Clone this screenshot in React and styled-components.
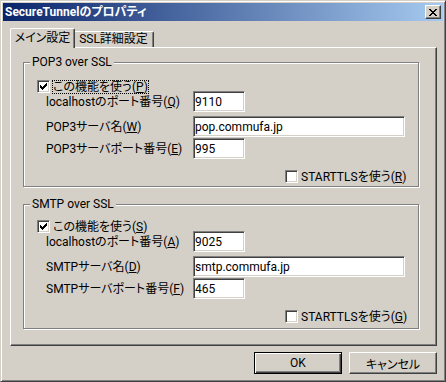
import React from "react";
import styled, { createGlobalStyle } from "styled-components";

const GlobalStyle = createGlobalStyle`
  html, body { margin: 0; padding: 0; background: #d4d0c8; }
  body {
    font-family: Roboto, "Noto Sans CJK JP", sans-serif;
    font-size: 12px;
    font-feature-settings: "palt" 1;
    color: #000;
  }
  input, button { font-feature-settings: "palt" 1; }
`;

const Window = styled.div`
  width: 446px;
  height: 382px;
  box-sizing: border-box;
  background: #d4d0c8;
  border: 1px solid;
  border-color: #d4d0c8 #404040 #404040 #d4d0c8;
  box-shadow: inset 1px 1px #fff, inset -1px -1px #808080;
  padding: 2px;
  display: flex;
  flex-direction: column;
`;

const TitleBar = styled.div`
  height: 18px;
  flex: none;
  display: flex;
  align-items: center;
  padding: 0 2px;
  background: linear-gradient(to right, #0a246a, #a6caf0);
  color: #fff;
`;

const TitleText = styled.div`
  flex: 1;
  font-weight: bold;
  font-size: 12px;
  line-height: 18px;
  white-space: nowrap;
`;

const CloseButton = styled.div`
  width: 16px;
  height: 14px;
  box-sizing: border-box;
  background: #d4d0c8;
  border: 1px solid;
  border-color: #fff #404040 #404040 #fff;
  box-shadow: inset -1px -1px #808080;
  display: flex;
  align-items: center;
  justify-content: center;
  svg { display: block; }
`;

const Body = styled.div`
  display: flex;
  flex-direction: column;
  padding: 7px 6px 0 7px;
`;

const TabStrip = styled.div`
  display: flex;
  align-items: flex-end;
  height: 19px;
`;

const Tab = styled.div`
  box-sizing: border-box;
  width: ${(p) => p.$width}px;
  height: ${(p) => (p.$active ? 20 : 16)}px;
  margin-bottom: ${(p) => (p.$active ? -1 : 0)}px;
  margin-right: ${(p) => (p.$active ? -2 : 0)}px;
  padding-bottom: ${(p) => (p.$active ? 1 : 0)}px;
  position: relative;
  z-index: ${(p) => (p.$active ? 1 : 0)};
  background: #d4d0c8;
  border-left: 1px solid #fff;
  border-top: 1px solid #fff;
  border-right: 1px solid #404040;
  border-radius: 2px 2px 0 0;
  box-shadow: inset -1px 0 #808080;
  display: flex;
  align-items: center;
  justify-content: center;
  line-height: 13px;
  white-space: nowrap;
`;

const Panel = styled.div`
  box-sizing: border-box;
  width: 427px;
  height: 299px;
  border: 1px solid;
  border-color: #fff #404040 #404040 #fff;
  box-shadow: inset -1px -1px #808080;
  padding: 14px 0 0 12px;
`;

const GroupBox = styled.div`
  position: relative;
  box-sizing: border-box;
  width: 396px;
  height: 125px;
  margin-top: ${(p) => p.$mt || 0}px;
  padding: ${(p) => p.$pt}px 0 0 13px;
  border: 1px solid #808080;
  box-shadow: inset 1px 1px #fff, 1px 1px 0 #fff;
`;

const Legend = styled.div`
  position: absolute;
  top: -7px;
  left: 6px;
  padding: 0 2px;
  background: #d4d0c8;
  line-height: 12px;
  white-space: nowrap;
`;

const CheckRow = styled.div`
  display: flex;
  align-items: center;
  height: 15px;
  margin-top: ${(p) => p.$mt || 0}px;
  margin-left: ${(p) => p.$ml || 0}px;
`;

const CheckBox = styled.div`
  flex: none;
  width: 13px;
  height: 13px;
  box-sizing: border-box;
  background: #fff;
  border: 1px solid;
  border-color: #808080 #fff #fff #808080;
  box-shadow: inset 1px 1px #404040, inset -1px -1px #d4d0c8;
  svg { display: block; }
`;

const CheckLabel = styled.span`
  margin-left: 2px;
  border: 1px dotted ${(p) => (p.$focused ? "#000" : "transparent")};
  line-height: 12px;
  white-space: nowrap;
`;

const FieldRow = styled.div`
  display: grid;
  grid-template-columns: 147px auto;
  align-items: center;
  margin-top: ${(p) => p.$mt || 0}px;
  margin-left: 9px;
`;

const FieldLabel = styled.span`
  white-space: nowrap;
  line-height: 12px;
`;

const TextBox = styled.input`
  box-sizing: border-box;
  width: ${(p) => p.$width}px;
  height: 21px;
  margin: 0;
  padding: 0 0 0 1px;
  border: 1px solid;
  border-color: #808080 #fff #fff #808080;
  box-shadow: inset 1px 1px #404040, inset -1px -1px #d4d0c8;
  background: #fff;
  font: inherit;
  font-size: 12px;
  color: #000;
  outline: none;
`;

const ButtonRow = styled.div`
  display: flex;
  justify-content: flex-end;
  gap: 7px;
  margin-top: 6px;
`;

const Button = styled.button`
  box-sizing: border-box;
  width: 88px;
  height: 22px;
  margin: 0;
  padding: 0;
  background: #d4d0c8;
  font: inherit;
  font-size: 12px;
  color: #000;
  border: 1px solid;
  border-color: ${(p) => (p.$default ? "#000" : "#fff #404040 #404040 #fff")};
  box-shadow: ${(p) =>
    p.$default
      ? "inset 1px 1px #fff, inset -1px -1px #404040, inset -2px -2px #808080"
      : "inset -1px -1px #808080"};
`;

const CHECK = [5, 6, 7, 6, 5, 4, 3];

function Check({ checked }) {
  return (
    <CheckBox>
      {checked && (
        <svg width="11" height="11" shapeRendering="crispEdges">
          {CHECK.map((y, i) => (
            <rect key={i} x={2 + i} y={y - 1} width="1" height="3" fill="#000" />
          ))}
        </svg>
      )}
    </CheckBox>
  );
}

const CLOSE = [
  [[0, 2], [6, 2]],
  [[1, 2], [5, 2]],
  [[2, 2], [4, 2]],
  [[3, 2]],
  [[2, 2], [4, 2]],
  [[1, 2], [5, 2]],
  [[0, 2], [6, 2]],
];

function CloseGlyph() {
  return (
    <svg width="8" height="7" shapeRendering="crispEdges">
      {CLOSE.flatMap((row, y) =>
        row.map(([x, w], k) => <rect key={`${y}-${k}`} x={x} y={y} width={w} height="1" fill="#000" />)
      )}
    </svg>
  );
}

function Mn({ pre, k }) {
  return (
    <>
      {pre}(<u>{k}</u>)
    </>
  );
}

function Group({ title, mt, pt, focused, enable, local, host, port, tls, server }) {
  return (
    <GroupBox $mt={mt} $pt={pt}>
      <Legend>{title}</Legend>
      <CheckRow>
        <Check checked />
        <CheckLabel $focused={focused}>
          <Mn pre="この機能を使う" k={enable[0]} />
        </CheckLabel>
      </CheckRow>
      <FieldRow $mt={-3}>
        <FieldLabel>
          <Mn pre="localhostのポート番号" k={local[0]} />
        </FieldLabel>
        <TextBox $width={52} readOnly value={local[1]} />
      </FieldRow>
      <FieldRow $mt={4}>
        <FieldLabel>
          <Mn pre={`${server}サーバ名`} k={host[0]} />
        </FieldLabel>
        <TextBox $width={212} readOnly value={host[1]} />
      </FieldRow>
      <FieldRow $mt={1}>
        <FieldLabel>
          <Mn pre={`${server}サーバポート番号`} k={port[0]} />
        </FieldLabel>
        <TextBox $width={52} readOnly value={port[1]} />
      </FieldRow>
      <CheckRow $mt={10} $ml={248}>
        <Check />
        <CheckLabel>
          <Mn pre="STARTTLSを使う" k={tls} />
        </CheckLabel>
      </CheckRow>
    </GroupBox>
  );
}

export default function App() {
  return (
    <>
      <GlobalStyle />
      <Window>
        <TitleBar>
          <TitleText>SecureTunnelのプロパティ</TitleText>
          <CloseButton>
            <CloseGlyph />
          </CloseButton>
        </TitleBar>
        <Body>
          <TabStrip>
            <Tab $active $width={65}>メイン設定</Tab>
            <Tab $width={81}>SSL詳細設定</Tab>
          </TabStrip>
          <Panel>
            <Group
              title="POP3 over SSL"
              pt={16}
              focused
              server="POP3"
              enable={["P"]}
              local={["Q", "9110"]}
              host={["W", "pop.commufa.jp"]}
              port={["E", "995"]}
              tls="R"
            />
            <Group
              title="SMTP over SSL"
              mt={17}
              pt={14}
              server="SMTP"
              enable={["S"]}
              local={["A", "9025"]}
              host={["D", "smtp.commufa.jp"]}
              port={["F", "465"]}
              tls="G"
            />
          </Panel>
          <ButtonRow>
            <Button $default>OK</Button>
            <Button>キャンセル</Button>
          </ButtonRow>
        </Body>
      </Window>
    </>
  );
}
